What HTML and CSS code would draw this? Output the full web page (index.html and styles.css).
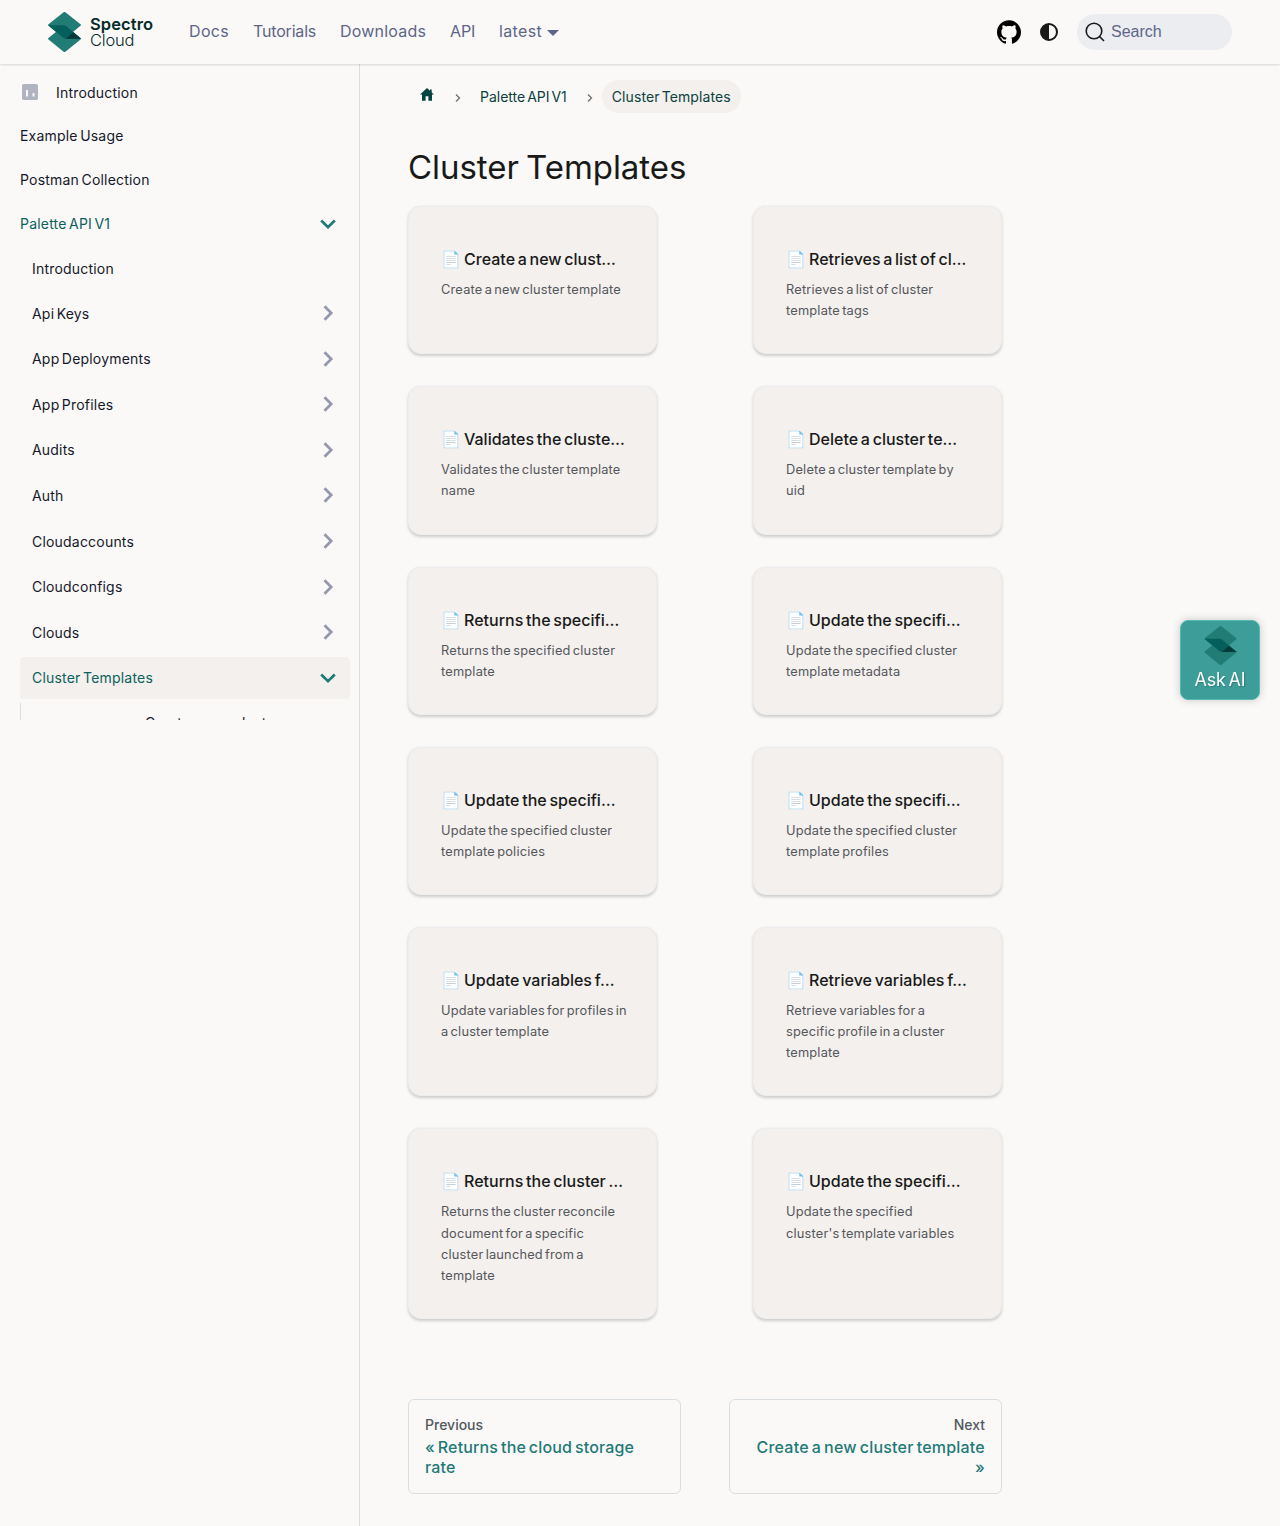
FILE: index.html
```html
<!DOCTYPE html>
<html lang="en">
<head>
<meta charset="utf-8">
<title>Cluster Templates | Palette</title>
<link rel="stylesheet" href="styles.css">
</head>
<body>
<svg class="defs" width="0" height="0" aria-hidden="true">
  <symbol id="mark" viewBox="0 0 33 40">
    <path fill="#217c76" d="M15.300.4a2 2 0 0 1 2.400 0L32.500 12.300q.9.700 0 1.500L17.700 26a2 2 0 0 1-2.400 0L.5 13.800q-.9-.8 0-1.500z"/>
    <path fill="#217c76" d="M15.300 14a2 2 0 0 1 2.400 0L32.500 26q.9.700 0 1.500L17.700 39.600a2 2 0 0 1-2.400 0L.5 27.500q-.9-.8 0-1.500z"/>
    <path fill="#035f5b" d="M.2 13.200H15q2 0 3.300 1L33 26.700H18.500q-2 0-3.500-1.200z"/>
    <path fill="#05393a" d="M25.300 20.200 33 26.700H18z"/>
  </symbol>
  <symbol id="chev" viewBox="0 0 16 16">
    <path fill="none" stroke="currentColor" stroke-width="2.700" d="m4.500 1.200 6.700 6.800-6.700 6.800"/>
  </symbol>
  <symbol id="sep" viewBox="0 0 8 10">
    <path fill="none" stroke="#6d6f72" stroke-width="1.300" d="m2 1.500 3.500 3.500L2 8.500"/>
  </symbol>
</svg>

<header class="navbar">
  <a class="brand">
    <svg width="33" height="40"><use href="#mark"/></svg>
    <span class="brand-name"><b>Spectro</b><span>Cloud</span></span>
  </a>
  <nav class="nav-links">
    <a class="wide">Docs</a><a class="tight">Tutorials</a><a>Downloads</a><a class="tight">API</a><a class="wide drop">latest</a>
  </nav>
  <div class="nav-tools">
    <svg width="24" height="24" viewBox="0 0 24 24"><path d="M12 .297c-6.630 0-12 5.373-12 12 0 5.303 3.438 9.800 8.205 11.385.6.113.82-.258.82-.577 0-.285-.01-1.040-.015-2.040-3.338.724-4.042-1.610-4.042-1.610C4.422 18.070 3.633 17.700 3.633 17.700c-1.087-.744.084-.729.084-.729 1.205.084 1.838 1.236 1.838 1.236 1.070 1.835 2.809 1.305 3.495.998.108-.776.417-1.305.76-1.605-2.665-.3-5.466-1.332-5.466-5.930 0-1.310.465-2.380 1.235-3.220-.135-.303-.54-1.523.105-3.176 0 0 1.005-.322 3.300 1.230.96-.267 1.980-.399 3-.405 1.020.006 2.040.138 3 .405 2.280-1.552 3.285-1.230 3.285-1.230.645 1.653.24 2.873.12 3.176.765.840 1.230 1.910 1.230 3.220 0 4.610-2.805 5.625-5.475 5.920.42.360.81 1.096.81 2.220 0 1.606-.015 2.896-.015 3.286 0 .315.21.690.825.570C20.565 22.092 24 17.592 24 12.297c0-6.627-5.373-12-12-12"/></svg>
    <svg class="theme" width="18" height="18" viewBox="0 0 18 18"><circle cx="9" cy="9" r="8" fill="none" stroke="#191919" stroke-width="2"/><path fill="#191919" d="M9 1v16A8 8 0 0 1 9 1z"/></svg>
    <div class="search">
      <svg width="20" height="20" viewBox="0 0 20 20" fill="none" stroke="#191919" stroke-width="1.600"><circle cx="9" cy="9" r="7.800"/><path d="m14.500 14.500 4.500 4.500"/></svg>
      <span>Search</span>
    </div>
  </div>
</header>

<div class="layout">
  <aside class="sidebar">
    <ul class="menu">
      <li class="leaf top"><svg class="chart" width="16" height="16" viewBox="0 0 16 16"><rect width="16" height="16" rx="1.800" fill="#b0b3c0"/><path fill="#faf9f7" d="M4 6h2v6.500H4zM10.500 9h2v3.500h-2z"/></svg>Introduction</li>
      <li class="leaf top">Example Usage</li>
      <li class="leaf top">Postman Collection</li>
      <li class="cat top open">Palette API V1<svg width="16" height="16"><use href="#chev"/></svg></li>
      <li class="leaf">Introduction</li>
      <li class="cat">Api Keys<svg width="16" height="16"><use href="#chev"/></svg></li>
      <li class="cat">App Deployments<svg width="16" height="16"><use href="#chev"/></svg></li>
      <li class="cat">App Profiles<svg width="16" height="16"><use href="#chev"/></svg></li>
      <li class="cat">Audits<svg width="16" height="16"><use href="#chev"/></svg></li>
      <li class="cat">Auth<svg width="16" height="16"><use href="#chev"/></svg></li>
      <li class="cat">Cloudaccounts<svg width="16" height="16"><use href="#chev"/></svg></li>
      <li class="cat">Cloudconfigs<svg width="16" height="16"><use href="#chev"/></svg></li>
      <li class="cat">Clouds<svg width="16" height="16"><use href="#chev"/></svg></li>
      <li class="cat open active">Cluster Templates<svg width="16" height="16"><use href="#chev"/></svg></li>
      <li class="leaf nested">Create a new cluster</li>
    </ul>
  </aside>

  <main class="content">
    <nav class="crumbs">
      <a class="home"><svg width="14" height="13" viewBox="0 0 14 13"><path fill="#064442" d="M7 0 0 6.600h2V12.700h3.600V8.300h2.800v4.400H12V6.600h2L11.700 4.400V1.500H10v1.300z"/></svg></a>
      <svg class="sep" width="8" height="10"><use href="#sep"/></svg>
      <a class="mid">Palette API V1</a>
      <svg class="sep" width="8" height="10"><use href="#sep"/></svg>
      <span class="here">Cluster Templates</span>
    </nav>
    <h1>Cluster Templates</h1>
    <section class="cards">
      <article class="card"><h2><i>📄</i>Create a new clust…</h2><p>Create a new cluster template</p></article>
      <article class="card"><h2><i>📄</i>Retrieves a list of cl…</h2><p>Retrieves a list of cluster<br>template tags</p></article>
      <article class="card"><h2><i>📄</i>Validates the cluste…</h2><p>Validates the cluster template<br>name</p></article>
      <article class="card"><h2><i>📄</i>Delete a cluster te…</h2><p>Delete a cluster template by<br>uid</p></article>
      <article class="card"><h2><i>📄</i>Returns the specifi…</h2><p>Returns the specified cluster<br>template</p></article>
      <article class="card"><h2><i>📄</i>Update the specifi…</h2><p>Update the specified cluster<br>template metadata</p></article>
      <article class="card"><h2><i>📄</i>Update the specifi…</h2><p>Update the specified cluster<br>template policies</p></article>
      <article class="card"><h2><i>📄</i>Update the specifi…</h2><p>Update the specified cluster<br>template profiles</p></article>
      <article class="card"><h2><i>📄</i>Update variables f…</h2><p>Update variables for profiles in<br>a cluster template</p></article>
      <article class="card"><h2><i>📄</i>Retrieve variables f…</h2><p>Retrieve variables for a<br>specific profile in a cluster<br>template</p></article>
      <article class="card"><h2><i>📄</i>Returns the cluster …</h2><p>Returns the cluster reconcile<br>document for a specific<br>cluster launched from a<br>template</p></article>
      <article class="card"><h2><i>📄</i>Update the specifi…</h2><p>Update the specified<br>cluster's template variables</p></article>
    </section>
    <nav class="pager">
      <a><small>Previous</small><span>« Returns the cloud storage<br>rate</span></a>
      <a class="next"><small>Next</small><span>Create a new cluster template<br>»</span></a>
    </nav>
  </main>
</div>

<button class="ask"><svg width="33" height="39"><use href="#mark"/></svg><span>Ask AI</span></button>
</body>
</html>
```
FILE: styles.css
```css
* { box-sizing: border-box; }
body {
  margin: 0;
  background: #faf9f7;
  color: #191919;
  font-family: Inter, "Open Sans", sans-serif;
  font-size: 16px;
}
h1, h2, p, ul { margin: 0; padding: 0; }
.defs { position: absolute; }

.navbar {
  height: 64px;
  padding: 0 48px;
  display: flex;
  align-items: center;
  position: relative;
  box-shadow: 0 1px 2px rgba(0, 0, 0, .14);
}
.brand { display: flex; align-items: center; gap: 9px; width: 129px; }
.brand svg { flex: none; }
.brand-name {
  display: flex;
  flex-direction: column;
  font-size: 16.500px;
  line-height: 16px;
  color: #062b2a;
}
.brand-name b { font-weight: 600; letter-spacing: .1px; }
.brand-name span { font-weight: 300; letter-spacing: -.2px; }
.nav-links {
  display: flex;
  gap: 24px;
  margin-left: 12px;
  color: #5d6588;
  line-height: 24px;
  position: relative;
  top: -1px;
}
.nav-links a { letter-spacing: .19px; }
.nav-links .wide { letter-spacing: .33px; }
.nav-links .tight { letter-spacing: -.19px; }
.drop { display: flex; align-items: center; }
.drop::after {
  content: "";
  margin: 3px 0 0 5px;
  border: 6px solid transparent;
  border-top-color: #5d6588;
  border-bottom: 0;
}
.nav-tools { display: flex; align-items: center; margin-left: auto; }
.theme { margin: 0 19px; }
.search {
  width: 155px;
  height: 36px;
  padding-left: 8px;
  display: flex;
  align-items: center;
  gap: 6px;
  border-radius: 18px;
  background: #ebedf0;
  color: #5d6588;
  font-family: "Liberation Sans", Arial, sans-serif;
}

.layout { display: flex; height: 1462px; }
.sidebar {
  flex: none;
  width: 360px;
  border-right: 1px solid #dadde1;
}
.menu {
  height: 656px;
  overflow: hidden;
  padding: 8.700px 9px 0 20px;
  list-style: none;
  display: flex;
  flex-direction: column;
  gap: 4px;
  font-size: 14px;
  letter-spacing: .2px;
  word-spacing: -1.700px;
  color: #15182b;
}
.menu li {
  flex: none;
  display: flex;
  align-items: center;
  padding-left: 12px;
  border-radius: 4px;
}
.menu .top { padding-left: 0; }
.leaf { height: 39.500px; }
.cat { height: 41.600px; justify-content: space-between; padding-right: 14px; color: #15182b; }
.cat svg { color: #9598ac; }
.menu .open { color: #0d605b; }
.open svg { transform: rotate(90deg); color: #1f7a78; }
.active { background: #f3f0ed; }
.chart { margin: 0 18px 0 2px; }
.menu .nested { border-left: 1px solid #dadde1; border-radius: 0; padding-left: 124px; }

.content { width: 642px; padding: 16px 0 0 48px; }
.crumbs { display: flex; align-items: center; height: 33px; font-size: 14px; color: #0c3f3e; word-spacing: -2px; }
.home { margin: 0 20px 5px 12px; line-height: 0; }
.sep { margin: 2px 0 0; flex: none; }
.mid { margin: 0 19px 0 18px; white-space: nowrap; }
.here {
  height: 33px;
  line-height: 33px;
  padding: 0 10px;
  margin-left: 8px;
  border-radius: 17px;
  background: #f3f0ed;
  letter-spacing: .1px;
  white-space: nowrap;
}
h1 {
  margin: 34px 0 19px;
  font-size: 33px;
  font-weight: 400;
  line-height: 40px;
  letter-spacing: -.05px;
  word-spacing: -2px;
}

.cards { display: grid; grid-template-columns: 249px 249px; gap: 32px 96px; }
.card {
  padding: 32px;
  border: 1px solid #ebedf0;
  border-radius: 12.800px;
  background: #f3f0ed;
  box-shadow: 0 1.500px 3px rgba(0, 0, 0, .18);
  white-space: nowrap;
}
.card h2 {
  height: 40px;
  line-height: 41px;
  font-size: 16px;
  font-weight: 500;
  letter-spacing: .02px;
  word-spacing: -1.600px;
  color: #191919;
}
.card h2 i { display: inline-block; width: 23px; font-style: normal; }
.card p {
  font-size: 12.800px;
  line-height: 21.120px;
  letter-spacing: .2px;
  word-spacing: -1.600px;
  color: #53565b;
}

.pager { display: grid; grid-template-columns: 1fr 1fr; gap: 48px; margin-top: 80.500px; white-space: nowrap; }
.pager a {
  height: 95px;
  padding: 15px 16px;
  border: 1px solid #dadde1;
  border-radius: 6px;
  font-weight: 500;
  line-height: 20px;
  letter-spacing: .15px;
  word-spacing: -1.500px;
  color: #1f7a78;
}
.pager small { display: block; font-size: 14px; line-height: 20px; margin-bottom: 2px; color: #525860; letter-spacing: 0; }
.pager .next { text-align: right; letter-spacing: .22px; }

.ask {
  position: fixed;
  left: 1180px;
  top: 620px;
  width: 80px;
  height: 80px;
  padding: 5px 0 0;
  display: flex;
  flex-direction: column;
  align-items: center;
  border: 1px solid #58bbb3;
  border-radius: 8px;
  background: #3d9d99;
  box-shadow: 0 0 8px rgba(0, 0, 0, .2);
  color: #fff;
  font: 400 18px/30px Inter, "Open Sans", sans-serif;
  letter-spacing: -.2px;
  word-spacing: -2px;
}
.ask span { text-shadow: 1px 1px 1px rgba(0, 0, 0, .2); }
```
